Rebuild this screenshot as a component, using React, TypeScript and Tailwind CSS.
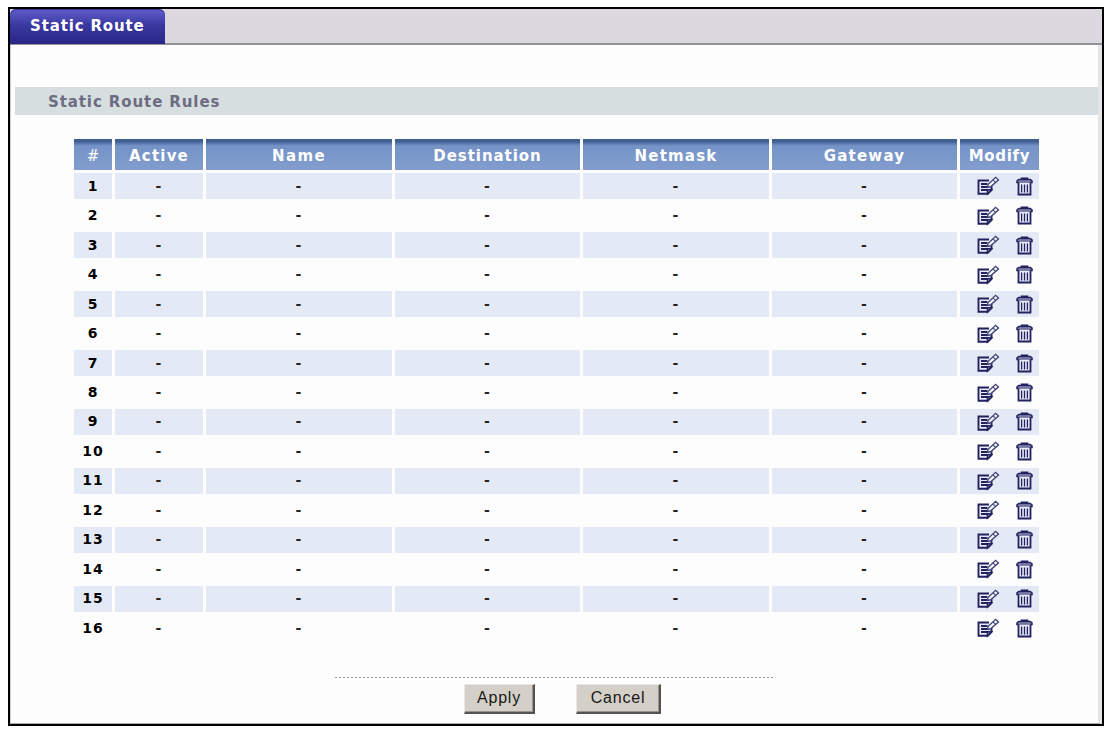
import React from "react";

const columns = [
  { label: "#", text: "text-[15px] font-normal" },
  { label: "Active", text: "tracking-[1.2px]" },
  { label: "Name", text: "tracking-[1.4px]" },
  { label: "Destination", text: "tracking-[0.95px]" },
  { label: "Netmask", text: "tracking-[1.2px]" },
  { label: "Gateway", text: "tracking-[1.2px]" },
  { label: "Modify", text: "tracking-[0.7px]" },
];

const grid =
  "grid grid-cols-[38px_88px_186px_185px_186px_185px_79px] gap-x-[3px]";

const rules = Array.from({ length: 16 }, (_, i) => i + 1);

function EditIcon() {
  return (
    <svg width="23" height="20" viewBox="0 0 23 20" fill="none" stroke="#22225f">
      <path d="M12 4.5H1.5v13.3h9.2l3.8-3.8V10" fill="#e8ebf8" strokeWidth="1.9" />
      <path d="M4 8h6.5M4 11h8.5M4 14h6" strokeWidth="1.8" />
      <path d="M10.4 18v-4.3h4.3z" fill="#8487b0" strokeWidth="1.4" />
      <path d="M10.2 11.4l1-3.1 7.4-7 2.9 2.7-7.6 6.6z" fill="#f4f5fb" stroke="#3f4174" strokeWidth="1.3" />
      <path d="M16 3.8l2.8 2.8" stroke="#3f4174" strokeWidth="1.1" />
    </svg>
  );
}

function TrashIcon() {
  return (
    <svg width="17" height="19" viewBox="0 0 17 19" fill="none" stroke="#22225f">
      <path d="M5.5 2V1.2h6V2" strokeWidth="1.6" />
      <path d="M1 5.5V3.8l1.8-1.3h11.4L16 3.8v1.7z" fill="#8f92b6" strokeWidth="1.5" />
      <path d="M2.5 5.5v12h12v-12" fill="#e8ebf8" strokeWidth="1.8" />
      <path d="M5.6 7.5v8M8.5 7.5v8M11.4 7.5v8" strokeWidth="1.3" />
    </svg>
  );
}

function RuleRow({ index }: { index: number }) {
  const cell = `flex items-center justify-center ${index % 2 ? "bg-[#e4eaf5]" : ""}`;
  return (
    <div className={`${grid} h-[26.47px]`}>
      <div className={`${cell} text-[14px] font-bold tracking-[1px]`}>{index}</div>
      {["active", "name", "destination", "netmask", "gateway"].map((key) => (
        <div key={key} className={`${cell} pr-px text-[14px] font-bold text-[#222]`}>-</div>
      ))}
      <div className={`${cell} gap-[16px] pl-[10px]`}>
        <EditIcon />
        <TrashIcon />
      </div>
    </div>
  );
}

function PushButton({ label, size }: { label: string; size: string }) {
  return (
    <button
      className={`${size} h-[30px] border-t border-l border-r-2 border-b-2 border-t-[#e9e7e3] border-l-[#e9e7e3] border-r-[#55534f] border-b-[#55534f] bg-[#d4d0c8] font-['Liberation_Sans',sans-serif] text-[16px] leading-none tracking-[0.8px] text-[#181818] shadow-[inset_-1px_-1px_0_#98958e]`}
    >
      {label}
    </button>
  );
}

export default function App() {
  return (
    <div className="h-[729px] w-[1107px] bg-white pt-[7px] pl-2 font-['DejaVu_Sans',sans-serif] text-black">
      <div className="flex h-[719px] w-[1096px] flex-col border-2 border-black bg-[#fdfdfd]">
        <header className="flex h-9 shrink-0 border-b-2 border-[#949296] bg-[#dcd8df]">
          <div className="flex h-[35px] w-[155px] shrink-0 items-center rounded-t-[6px] bg-linear-to-b from-[#625fce] via-[#3b38a0] via-45% to-[#292687] pl-5 text-[15px] font-bold tracking-[0.85px] whitespace-nowrap text-white shadow-[inset_0_1px_1px_#35328f]">
            Static Route
          </div>
        </header>
        <main className="flex flex-1 flex-col border-r-4 border-b border-l border-r-[#e5e5e8] border-b-[#aaa] border-l-[#cfcfcf] pt-[42px] pl-1">
          <h1 className="flex h-7 shrink-0 items-center bg-[#d6dedf] pt-[3px] pl-[33px] text-[15px] font-bold tracking-[0.9px] text-[#6c6c82]">
            Static Route Rules
          </h1>
          <div className="mt-6 ml-[59px] w-[965px]">
            <div className={`${grid} h-[31px]`}>
              {columns.map(({ label, text }) => (
                <div
                  key={label}
                  className="flex items-center justify-center bg-linear-to-b from-[#405f93] from-8% via-[#7593c7] via-22% to-[#829dcd] pt-[3px] text-[15px] font-bold whitespace-nowrap text-white"
                >
                  <span className={text}>{label}</span>
                </div>
              ))}
            </div>
            <div className="mt-[3px] flex flex-col gap-[3px]">
              {rules.map((index) => (
                <RuleRow key={index} index={index} />
              ))}
            </div>
          </div>
          <div className="mt-[35px] ml-[320px] h-px w-[440px] shrink-0 bg-[repeating-linear-gradient(90deg,#999_0_2px,transparent_2px_4px)]" />
          <div className="mt-[5px] ml-[449px] flex gap-[41px] pt-px">
            <PushButton label="Apply" size="w-[71px]" />
            <PushButton label="Cancel" size="w-[85px]" />
          </div>
        </main>
      </div>
    </div>
  );
}
